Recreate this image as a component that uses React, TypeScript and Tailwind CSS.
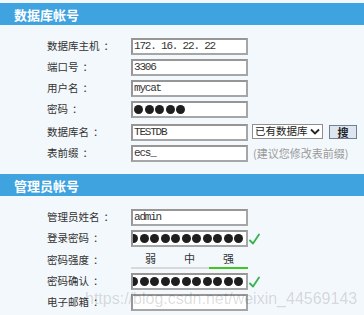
import React from 'react'

const cjk = { fontFamily: '"Microsoft YaHei", "Noto Sans CJK SC", sans-serif' }
const mono = { fontFamily: '"Liberation Mono", "Noto Sans CJK SC", monospace' }

const SectionTitle = ({ title }: { title: string }) => (
  <div className="h-[22px] bg-[#3fa3e0] flex items-center pl-[14px]">
    <span className="text-white text-[13px] font-bold leading-none" style={cjk}>{title}</span>
  </div>
)

const Row = ({ label, children, className = '' }: { label: string; children: React.ReactNode; className?: string }) => (
  <div className={`flex items-center ${className}`}>
    <div className="w-[131px] pl-[47px] text-[10.5px] text-[#333] leading-none" style={cjk}>
      {label}
      <span className="ml-[4px]">：</span>
    </div>
    {children}
  </div>
)

const TextBox = ({ value }: { value?: string }) => (
  <div
    className="w-[117px] h-[17px] bg-white border-2 border-[#a6a6a6] border-t-[#969696] border-l-[#969696] flex items-center pl-[1px] text-[11px] tracking-[-1.2px] text-[#333] overflow-hidden"
    style={mono}
  >
    {value}
  </div>
)

const Dots = ({ count, end }: { count: number; end?: boolean }) => (
  <div
    className={`w-[117px] h-[17px] bg-white border-2 border-[#a6a6a6] border-t-[#969696] border-l-[#969696] flex items-center gap-[1.5px] overflow-hidden ${
      end ? 'justify-end pr-[3px]' : 'pl-[1px]'
    }`}
  >
    {Array.from({ length: count }).map((_, i) => (
      <span key={i} className="w-[9px] h-[9px] rounded-full bg-[#1e1e1e] shrink-0" />
    ))}
  </div>
)

const Check = () => (
  <svg width="11" height="12" viewBox="0 0 11 12" className="ml-[1px]">
    <path d="M1 7.5 L4 10.5 L10 1.5" fill="none" stroke="#37b24d" strokeWidth="1.8" strokeLinecap="round" strokeLinejoin="round" />
  </svg>
)

export default function App() {
  return (
    <div className="relative w-[364px] h-[315px] bg-[#f3f8fc] pt-[3px] overflow-hidden">
      <SectionTitle title="数据库帐号" />
      <div className="flex flex-col gap-[4px] mt-[13px]">
        <Row label="数据库主机"><TextBox value="172. 16. 22. 22" /></Row>
        <Row label="端口号"><TextBox value="3306" /></Row>
        <Row label="用户名"><TextBox value="mycat" /></Row>
        <Row label="密码"><Dots count={5} /></Row>
        <Row label="数据库名" className="mt-[2px]">
          <TextBox value="TESTDB" />
          <div
            className="ml-[4px] w-[71px] h-[15px] bg-white border border-[#8f8f8f] flex items-center justify-between pl-[2px] pr-[2px] text-[10.5px] text-[#222] leading-none self-start"
            style={cjk}
          >
            <span>已有数据库</span>
            <svg width="10" height="7" viewBox="0 0 10 7">
              <path d="M1 1.5 L5 5.5 L9 1.5" fill="none" stroke="#222" strokeWidth="1.8" />
            </svg>
          </div>
          <div
            className="ml-[6px] w-[28px] h-[14px] bg-[#dde6f0] border border-[#6f8194] flex items-center justify-center text-[11px] font-bold text-[#222] leading-none self-start mt-[1px]"
            style={cjk}
          >
            搜
          </div>
        </Row>
        <Row label="表前缀">
          <TextBox value="ecs_" />
          <span className="ml-[5px] text-[11px] text-[#9a9a9a] leading-none" style={cjk}>(建议您修改表前缀)</span>
        </Row>
      </div>

      <div className="mt-[12px]">
        <SectionTitle title="管理员帐号" />
      </div>
      <div className="flex flex-col gap-[4px] mt-[13px]">
        <Row label="管理员姓名"><TextBox value="admin" /></Row>
        <Row label="登录密码"><Dots count={12} end /><Check /></Row>
        <Row label="密码强度">
          <div className="w-[117px] h-[18px] flex flex-col justify-end">
            <div className="grid grid-cols-3 text-[11px] text-[#333] leading-none text-center pb-[3px]" style={cjk}>
              <span>弱</span>
              <span>中</span>
              <span>强</span>
            </div>
            <div className="h-[2px] grid grid-cols-3">
              <div className="bg-[#d9d9d9]" />
              <div className="bg-[#d9d9d9]" />
              <div className="bg-[#3fc81e]" />
            </div>
          </div>
        </Row>
        <Row label="密码确认"><Dots count={12} end /><Check /></Row>
        <Row label="电子邮箱"><TextBox /></Row>
      </div>

      <div
        className="absolute left-[85px] top-[287px] text-[16px] text-black/15 whitespace-nowrap pointer-events-none"
        style={{ fontFamily: '"Liberation Sans", Arial, sans-serif' }}
      >
        https://blog.csdn.net/weixin_44569143
      </div>
    </div>
  )
}
